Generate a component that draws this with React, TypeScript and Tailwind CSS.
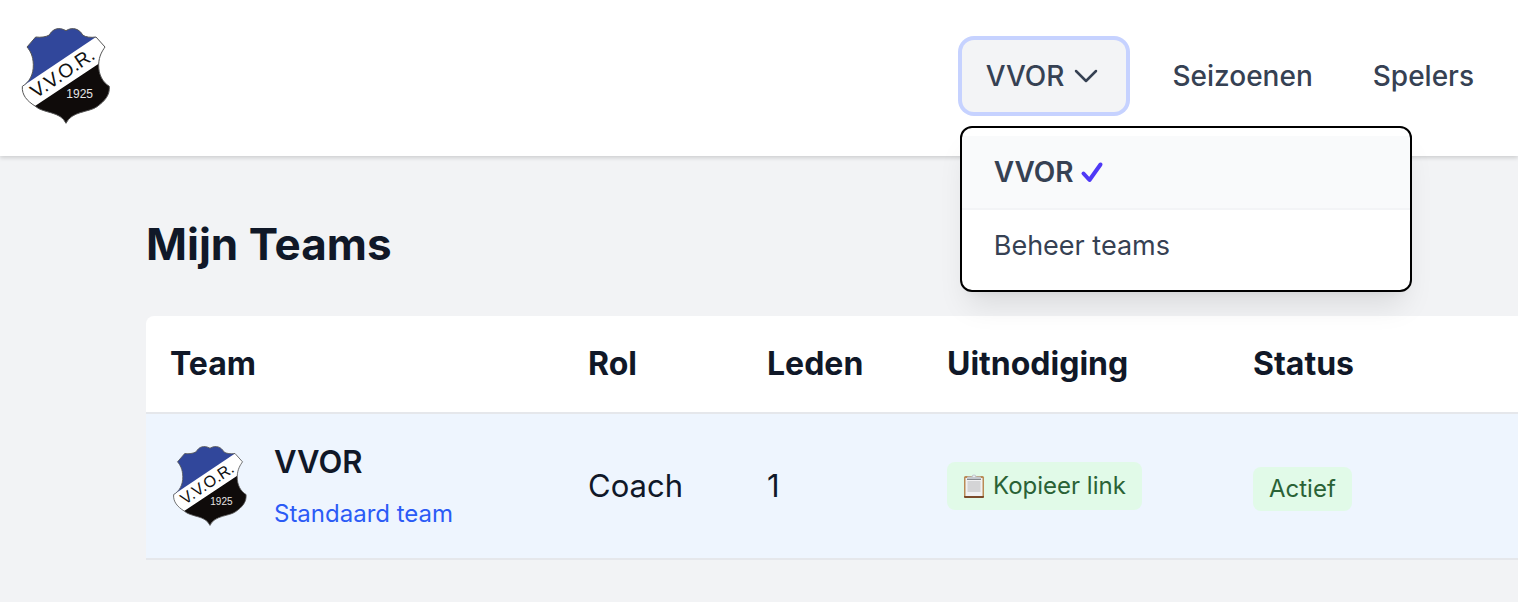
import React from 'react';

interface Team {
  id: number;
  name: string;
  role: string;
  members: number;
  isDefault: boolean;
  status: string;
}

const teams: Team[] = [
  { id: 1, name: 'VVOR', role: 'Coach', members: 1, isDefault: true, status: 'Actief' },
];

function ClubLogo({ className }: { className: string }) {
  const shield =
    'M78 66 C94 68 108 66 119 60 C128 43 146 34 169 47 C190 34 210 43 219 60 C228 67 244 68 259 66 L286 96 C278 108 268 122 267 148 C266 180 280 202 299 214 C301 240 286 258 262 275 C240 292 185 288 169 325 C153 288 100 296 76 273 C52 258 36 240 38 214 C58 202 72 180 71 148 C70 122 62 108 52 96 Z';
  const clipId = React.useId();

  return (
    <svg viewBox="25 39 288 288" className={className} role="img" aria-label="V.V.O.R. 1925">
      <clipPath id={clipId}>
        <path d={shield} />
      </clipPath>
      <g clipPath={`url(#${clipId})`}>
        <rect x="25" y="30" width="290" height="300" fill="#fff" />
        <path d="M30 30 H300 V38 L259 66 L59 200 L30 219 Z" fill="#31479b" />
        <path d="M76 273 L267 146 L320 110 V330 H76 Z" fill="#0f0b0a" />
      </g>
      <path d={shield} fill="none" stroke="#555" strokeWidth="3" />
      <text
        transform="translate(79 251) rotate(-34)"
        fontFamily="Liberation Sans, sans-serif"
        fontSize="58"
        fill="#111"
      >
        V.V.O.R.
      </text>
      <text x="170" y="250" fontFamily="Liberation Sans, sans-serif" fontSize="36" fill="#e5e5e5">
        1925
      </text>
    </svg>
  );
}

function ClipboardIcon() {
  return (
    <svg viewBox="0 0 22 24" className="h-6 w-[22px]" aria-hidden="true">
      <rect x="1" y="2" width="20" height="22" rx="1.5" fill="#b98a55" />
      <path d="M1 22 H21 V22.8 Q21 24 19.5 24 H2.5 Q1 24 1 22.8 Z" fill="#7b4b2b" />
      <rect x="2.5" y="4" width="17" height="18" fill="#f1f1f3" />
      <rect x="4.5" y="7" width="13" height="11" fill="#d4d4d6" />
      <path d="M4 5.5 V3.5 Q4 2.5 5 2.5 H8.5 Q9 0.5 11 0.5 T13.5 2.5 H17 Q18 2.5 18 3.5 V5.5 Z" fill="#c3c8cd" />
      <path d="M4 5.5 H18" stroke="#85898e" strokeWidth="1" />
      <circle cx="11" cy="2.3" r="0.9" fill="#f4f6f7" />
    </svg>
  );
}

function TeamMenu() {
  const [open, setOpen] = React.useState(true);

  return (
    <div className="relative mr-2.5">
      <button
        type="button"
        aria-expanded={open}
        onClick={() => setOpen(!open)}
        className="flex items-center gap-1.5 rounded-xl bg-gray-100 px-6 py-4 text-[28px] leading-10 font-medium text-gray-700 ring-4 ring-[#c6d2ff] outline-none"
      >
        VVOR
        <svg viewBox="0 0 32 32" className="size-8" fill="none" stroke="currentColor" strokeWidth="2.5" strokeLinecap="round" strokeLinejoin="round" aria-hidden="true">
          <path d="M6 11 L16 21 L26 11" />
        </svg>
      </button>
      {open && (
        <div className="absolute top-full left-0 z-10 mt-4 w-[448px] rounded-[10px] bg-white py-2 text-[28px] leading-10 text-gray-700 shadow-[0_20px_30px_-6px_rgba(0,0,0,0.1),0_8px_12px_-8px_rgba(0,0,0,0.1)] outline-2 outline-black">
          <button
            type="button"
            className="flex w-full items-center gap-1.5 bg-gray-50 px-8 py-4 text-left font-semibold"
          >
            VVOR
            <svg viewBox="0 0 24 24" className="size-6" fill="none" stroke="#4f39f6" strokeWidth="4" strokeLinecap="round" strokeLinejoin="round" aria-label="Geselecteerd">
              <path d="M3.5 13.5 L9.5 20 L20.5 4.5" />
            </svg>
          </button>
          <a href="#teams" className="block border-t-2 border-gray-100 px-8 py-4 text-[27px] font-normal">
            Beheer teams
          </a>
        </div>
      )}
    </div>
  );
}

export default function App() {
  return (
    <div className="min-h-screen overflow-x-hidden bg-[#f2f3f5] font-[Inter,sans-serif] text-gray-900">
      <header className="relative z-10 flex items-center justify-between bg-white pt-7 pr-5 pb-8 pl-[18px] shadow-[0_2px_4px_rgba(0,0,0,0.15)]">
        <a href="#home">
          <ClubLogo className="size-24" />
        </a>
        <nav className="flex items-center gap-3 text-[28px] leading-10 font-medium text-gray-700">
          <TeamMenu />
          <a href="#seizoenen" className="px-6 py-4">Seizoenen</a>
          <a href="#spelers" className="px-6 py-4">Spelers</a>
        </nav>
      </header>

      <main className="pt-14 pl-[146px]">
        <h1 className="mb-10 text-[44px] leading-[64px] font-bold">Mijn Teams</h1>
        <table id="teams" className="w-full table-fixed overflow-hidden rounded-tl-lg bg-white text-left leading-[48px]">
          <colgroup>
            <col className="w-[418px]" />
            <col className="w-[179px]" />
            <col className="w-[180px]" />
            <col className="w-[306px]" />
            <col />
          </colgroup>
          <thead className="text-[32px]">
            <tr className="border-b-2 border-gray-200">
              <th className="p-6 font-bold">Team</th>
              <th className="p-6 font-bold">Rol</th>
              <th className="p-6 font-bold">Leden</th>
              <th className="p-6 font-bold">Uitnodiging</th>
              <th className="p-6 font-bold">Status</th>
            </tr>
          </thead>
          <tbody className="text-[31px]">
            {teams.map(team => (
              <tr key={team.id} className="border-b-2 border-gray-200 bg-[#eef5fe]">
                <td className="p-6">
                  <div className="flex items-center gap-6">
                    <ClubLogo className="size-20" />
                    <div>
                      <div className="font-semibold">{team.name}</div>
                      {team.isDefault && (
                        <div className="mt-2 text-2xl leading-10 text-[#2b5bf6]">Standaard team</div>
                      )}
                    </div>
                  </div>
                </td>
                <td className="p-6">{team.role}</td>
                <td className="p-6">{team.members}</td>
                <td className="p-6">
                  <button
                    type="button"
                    className="inline-flex items-center gap-2 rounded-lg bg-[#e1fae8] px-4 py-2 text-2xl leading-8 text-[#2a6236]"
                  >
                    <ClipboardIcon />
                    Kopieer link
                  </button>
                </td>
                <td className="p-6">
                  <span className="inline-block rounded-lg bg-[#e1fae8] px-4 py-1.5 text-2xl leading-8 text-[#2a6236]">
                    {team.status}
                  </span>
                </td>
              </tr>
            ))}
          </tbody>
        </table>
      </main>
    </div>
  );
}
